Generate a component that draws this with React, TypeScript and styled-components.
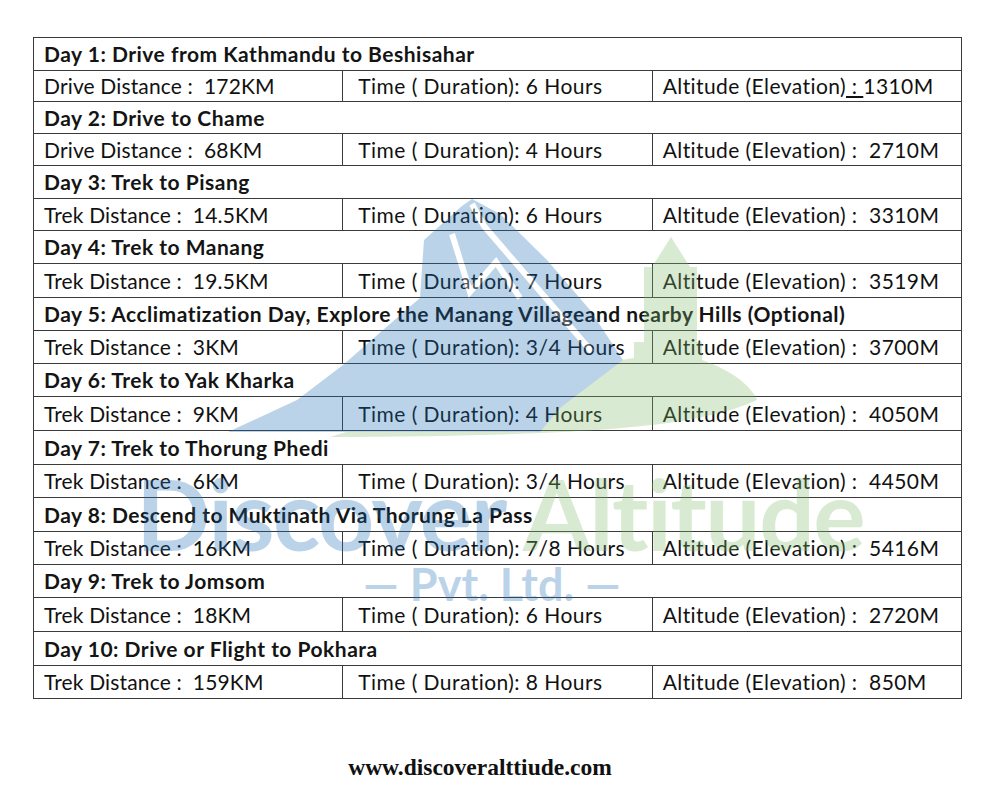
import React from 'react';
import styled, { createGlobalStyle } from 'styled-components';

const GlobalStyle = createGlobalStyle`
  html, body {
    margin: 0;
    padding: 0;
    background: #ffffff;
  }
  body {
    font-family: Lato, "Open Sans", "Liberation Sans", sans-serif;
    color: #000;
  }
`;

interface DayPlan {
  title: string;
  mode: 'Drive' | 'Trek';
  distance: string;
  hours: string;
  altitude: string;
}

const days: DayPlan[] = [
  { title: 'Day 1: Drive from Kathmandu to Beshisahar', mode: 'Drive', distance: '172KM', hours: '6', altitude: '1310M' },
  { title: 'Day 2: Drive to Chame', mode: 'Drive', distance: '68KM', hours: '4', altitude: '2710M' },
  { title: 'Day 3: Trek to Pisang', mode: 'Trek', distance: '14.5KM', hours: '6', altitude: '3310M' },
  { title: 'Day 4: Trek to Manang', mode: 'Trek', distance: '19.5KM', hours: '7', altitude: '3519M' },
  { title: 'Day 5: Acclimatization Day, Explore the Manang Villageand nearby Hills (Optional)', mode: 'Trek', distance: '3KM', hours: '3/4', altitude: '3700M' },
  { title: 'Day 6: Trek to Yak Kharka', mode: 'Trek', distance: '9KM', hours: '4', altitude: '4050M' },
  { title: 'Day 7: Trek to Thorung Phedi', mode: 'Trek', distance: '6KM', hours: '3/4', altitude: '4450M' },
  { title: 'Day 8: Descend to Muktinath Via Thorung La Pass', mode: 'Trek', distance: '16KM', hours: '7/8', altitude: '5416M' },
  { title: 'Day 9: Trek to Jomsom', mode: 'Trek', distance: '18KM', hours: '6', altitude: '2720M' },
  { title: 'Day 10: Drive or Flight to Pokhara', mode: 'Trek', distance: '159KM', hours: '8', altitude: '850M' },
];

// row pitch of the source document (it is a scanned word table, rows are not all equal)
const rowPitch = [33, 31, 32, 32, 33, 32, 33, 34, 33, 33, 33, 34, 34, 33, 34, 33, 33, 34, 34, 33];

const Page = styled.div`
  position: relative;
  width: 1000px;
  height: 800px;
  padding: 37px 0 0 33px;
  box-sizing: border-box;
  overflow: hidden;
`;

const Itinerary = styled.table`
  width: 929px;
  border-collapse: collapse;
  table-layout: fixed;
`;

const Cell = styled.td<{ $heading?: boolean; $indent?: number; $spacing?: number; $pitch: number }>`
  height: ${(p) => p.$pitch - 1}px;
  padding: 0 0 0 ${(p) => p.$indent ?? 10}px;
  border: 1px solid #3a3a3a;
  font-size: 21px;
  line-height: 24px;
  font-weight: ${(p) => (p.$heading ? 700 : 400)};
  letter-spacing: ${(p) => (p.$heading ? 0.5 : p.$spacing ?? 0)}px;
  color: ${(p) => (p.$heading ? '#141414' : '#111')};
  white-space: pre;
  vertical-align: middle;
  overflow: hidden;
`;

const Underlined = styled.span`
  text-decoration: underline;
  text-underline-offset: 2px;
`;

const Footer = styled.div`
  width: 894px;
  margin-top: 55px;
  text-align: center;
  font-family: "Liberation Serif", "Times New Roman", serif;
  font-weight: 700;
  font-size: 23.5px;
  line-height: 26px;
  color: #111;
`;

const Watermark = styled.div`
  position: absolute;
  left: 140px;
  top: 195px;
  width: 730px;
  opacity: 0.3;
  pointer-events: none;
  display: flex;
  flex-direction: column;
  align-items: center;
`;

const LogoArt = styled.svg`
  display: block;
  width: 730px;
  height: 245px;
`;

const BrandName = styled.div`
  margin-top: 24px;
  margin-right: 10px;
  font-family: Lato, "Open Sans", sans-serif;
  font-weight: 700;
  font-size: 98px;
  line-height: 98px;
  white-space: nowrap;
  letter-spacing: -1.5px;
`;

const Tone = styled.span<{ $tone: 'blue' | 'green' }>`
  color: ${(p) => (p.$tone === 'blue' ? '#1f6fb5' : '#80bc6c')};
`;

const Company = styled.div`
  font-family: Lato, "Open Sans", sans-serif;
  font-weight: 700;
  font-size: 45px;
  line-height: 44px;
  color: #1f6fb5;
  white-space: pre;
  margin-right: 26px;
`;

function Logo() {
  return (
    <LogoArt viewBox="140 195 730 245">
      <path
        d="M671 237 L690 267 L697 267 L697 342 L702 342 L702 360 C730 370 750 384 757 400 C700 426 600 436 330 437 C420 410 520 374 634 358 L634 342 L644 342 L644 267 L652 267 Z"
        fill="#80bc6c"
      />
      <path
        d="M228 432 L297 400 L343 365 L383 330 L420 298 L424 240 L462 206 L472 199 L500 214 L547 260 L590 310 L623 360 L560 408 L540 432 Z"
        fill="#1f6fb5"
      />
      <path
        d="M472 204 L484 226 L592 352 M452 234 L470 292 L496 262 L520 298"
        fill="none"
        stroke="#ffffff"
        strokeWidth="6"
        strokeLinejoin="miter"
      />
    </LogoArt>
  );
}

export default function App() {
  return (
    <>
      <GlobalStyle />
      <Page>
        <Itinerary>
          <tbody>
            {days.map((d, i) => (
              <React.Fragment key={d.title}>
                <tr>
                  <Cell $heading $pitch={rowPitch[i * 2]} colSpan={3}>
                    {d.title}
                  </Cell>
                </tr>
                <tr>
                  <Cell $pitch={rowPitch[i * 2 + 1]} $spacing={0.15}>
                    {`${d.mode} Distance :  ${d.distance}`}
                  </Cell>
                  <Cell $pitch={rowPitch[i * 2 + 1]} $indent={15} $spacing={0.45}>
                    {`Time ( Duration): ${d.hours} Hours`}
                  </Cell>
                  <Cell $pitch={rowPitch[i * 2 + 1]} $spacing={0.42}>
                    {i === 0 ? (
                      <>
                        Altitude (Elevation)<Underlined> : </Underlined>
                        {d.altitude}
                      </>
                    ) : (
                      `Altitude (Elevation) :  ${d.altitude}`
                    )}
                  </Cell>
                </tr>
              </React.Fragment>
            ))}
          </tbody>
        </Itinerary>
        <Footer>www.discoveralttiude.com</Footer>
        <Watermark>
          <Logo />
          <BrandName>
            <Tone $tone="blue">Discover</Tone> <Tone $tone="green">Altitude</Tone>
          </BrandName>
          <Company>{'— Pvt. Ltd. —'}</Company>
        </Watermark>
      </Page>
    </>
  );
}
